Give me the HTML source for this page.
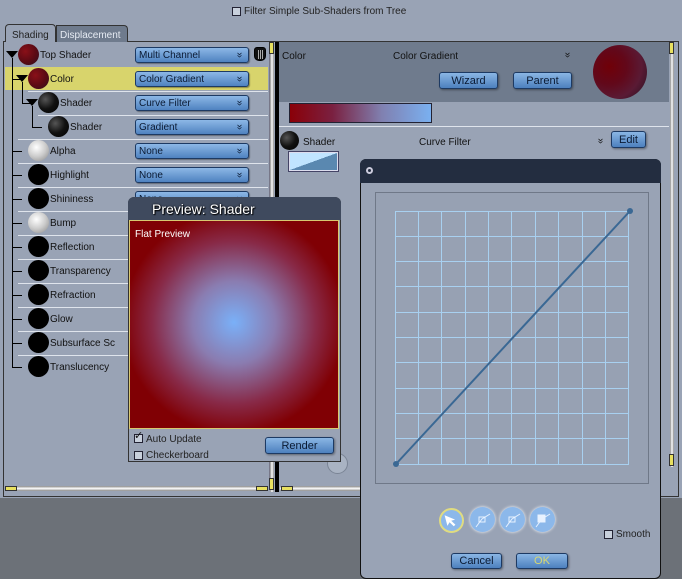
<!DOCTYPE html>
<html><head><meta charset="utf-8"><style>
*{margin:0;padding:0;box-sizing:border-box}
body{width:682px;height:575px;overflow:hidden;position:relative;background:#6c7178;font-family:"Liberation Sans",sans-serif;font-size:10px;color:#111}
.a{position:absolute}
.dd{position:absolute;left:135px;width:114px;height:16px;border:1px solid #1d3a63;border-radius:3px;background:linear-gradient(#8db8e6,#4f82c0);color:#0a1a33;font-size:10px;line-height:16px;padding-left:3px;box-shadow:1px 1px 1px rgba(0,0,0,.35)}
.dd:after{content:"»";position:absolute;right:6px;top:0px;transform:rotate(90deg);font-size:10px;line-height:14px}
.sp{position:absolute;width:21px;height:21px;border-radius:50%}
.red{background:radial-gradient(circle at 35% 35%,#8a1018,#5a0a14 55%,#2a1022)}
.blk{background:radial-gradient(circle at 35% 35%,#555,#111 50%,#000)}
.blk2{background:#000}
.wht{background:radial-gradient(circle at 40% 35%,#fff,#ccc 50%,#888)}
.lbl{position:absolute;font-size:10px;line-height:12px}
.sep{position:absolute;height:1px;background:#dfe4ec;right:0}
.btn{position:absolute;height:17px;border:1px solid #1d3a63;border-radius:3px;background:linear-gradient(#8ab6e4,#4d80be);text-align:center;font-size:11px;line-height:16px;color:#0a1a33;box-shadow:1px 1px 2px rgba(0,0,0,.4)}
.cb{position:absolute;width:9px;height:9px;border:1px solid #223;background:#c8d0dc}
.tl{position:absolute;background:#000}
</style></head><body>
<div class="a" style="left:0;top:0;width:682px;height:498px;background:#99a3b5"></div>
<div class="cb" style="left:232px;top:7px"></div>
<div class="lbl" style="left:244px;top:6px;color:#222">Filter Simple Sub-Shaders from Tree</div>
<div class="a" style="left:3px;top:41px;width:676px;height:456px;border:1px solid #333"></div>
<div class="a" style="left:5px;top:24px;width:51px;height:18px;border:1px solid #333;border-bottom:none;border-radius:4px 4px 0 0;background:#99a3b5"></div>
<div class="lbl" style="left:12px;top:30px;color:#222">Shading</div>
<div class="a" style="left:56px;top:25px;width:72px;height:17px;border:1px solid #333;border-bottom:none;border-radius:0 4px 0 0;background:#6f7b8d"></div>
<div class="lbl" style="left:60px;top:30px;color:#e6ebf3">Displacement</div>
<div class="a" style="left:5px;top:42px;width:265px;height:446px;background:#99a3b5;border-right:1px solid #778"></div>
<div class="a" style="left:5px;top:67px;width:263px;height:23px;background:#d8d46c"></div>
<div class="tl" style="left:12px;top:58px;width:1px;height:310px"></div>
<div class="tl" style="left:22px;top:82px;width:1px;height:22px"></div>
<div class="tl" style="left:22px;top:103px;width:10px;height:1px"></div>
<div class="tl" style="left:32px;top:106px;width:1px;height:21px"></div>
<div class="tl" style="left:32px;top:127px;width:10px;height:1px"></div>
<div class="tl" style="left:12px;top:79px;width:10px;height:1px"></div>
<div class="a" style="left:6px;top:51px;border-left:6px solid transparent;border-right:6px solid transparent;border-top:7px solid #000"></div>
<div class="a" style="left:16px;top:75px;border-left:6px solid transparent;border-right:6px solid transparent;border-top:7px solid #000"></div>
<div class="a" style="left:26px;top:99px;border-left:6px solid transparent;border-right:6px solid transparent;border-top:7px solid #000"></div>
<div class="sp red" style="left:18px;top:44px"></div><div class="lbl" style="left:40px;top:50px">Top Shader</div>
<div class="dd" style="top:47px">Multi Channel</div>
<div class="a" style="left:254px;top:47px;width:12px;height:14px;border-radius:3px 3px 5px 5px;background:#111;border:1px solid #000"></div>
<div class="a" style="left:257px;top:50px;width:6px;height:9px;background:repeating-linear-gradient(90deg,#111 0 1px,#aaa 1px 2px)"></div>
<div class="sp red" style="left:28px;top:68px"></div><div class="lbl" style="left:50px;top:74px">Color</div>
<div class="dd" style="top:71px">Color Gradient</div>
<div class="sep" style="left:28px;top:91px;width:240px"></div>
<div class="sp blk" style="left:38px;top:92px"></div><div class="lbl" style="left:60px;top:98px">Shader</div>
<div class="dd" style="top:95px">Curve Filter</div>
<div class="sep" style="left:38px;top:115px;width:230px"></div>
<div class="sp blk" style="left:48px;top:116px"></div><div class="lbl" style="left:70px;top:122px">Shader</div>
<div class="dd" style="top:119px">Gradient</div>
<div class="sep" style="left:18px;top:139px;width:250px"></div>
<div class="tl" style="left:12px;top:151px;width:10px;height:1px"></div><div class="sp wht" style="left:28px;top:140px"></div><div class="lbl" style="left:50px;top:146px">Alpha</div><div class="dd" style="top:143px">None</div><div class="sep" style="left:18px;top:163px;width:250px"></div>
<div class="tl" style="left:12px;top:175px;width:10px;height:1px"></div><div class="sp blk2" style="left:28px;top:164px"></div><div class="lbl" style="left:50px;top:170px">Highlight</div><div class="dd" style="top:167px">None</div><div class="sep" style="left:18px;top:187px;width:250px"></div>
<div class="tl" style="left:12px;top:199px;width:10px;height:1px"></div><div class="sp blk2" style="left:28px;top:188px"></div><div class="lbl" style="left:50px;top:194px">Shininess</div><div class="dd" style="top:191px">None</div><div class="sep" style="left:18px;top:211px;width:250px"></div>
<div class="tl" style="left:12px;top:223px;width:10px;height:1px"></div><div class="sp wht" style="left:28px;top:212px"></div><div class="lbl" style="left:50px;top:218px">Bump</div><div class="sep" style="left:18px;top:235px;width:250px"></div>
<div class="tl" style="left:12px;top:247px;width:10px;height:1px"></div><div class="sp blk2" style="left:28px;top:236px"></div><div class="lbl" style="left:50px;top:242px">Reflection</div><div class="sep" style="left:18px;top:259px;width:250px"></div>
<div class="tl" style="left:12px;top:271px;width:10px;height:1px"></div><div class="sp blk2" style="left:28px;top:260px"></div><div class="lbl" style="left:50px;top:266px">Transparency</div><div class="sep" style="left:18px;top:283px;width:250px"></div>
<div class="tl" style="left:12px;top:295px;width:10px;height:1px"></div><div class="sp blk2" style="left:28px;top:284px"></div><div class="lbl" style="left:50px;top:290px">Refraction</div><div class="sep" style="left:18px;top:307px;width:250px"></div>
<div class="tl" style="left:12px;top:319px;width:10px;height:1px"></div><div class="sp blk2" style="left:28px;top:308px"></div><div class="lbl" style="left:50px;top:314px">Glow</div><div class="sep" style="left:18px;top:331px;width:250px"></div>
<div class="tl" style="left:12px;top:343px;width:10px;height:1px"></div><div class="sp blk2" style="left:28px;top:332px"></div><div class="lbl" style="left:50px;top:338px">Subsurface Sc</div><div class="sep" style="left:18px;top:355px;width:250px"></div>
<div class="tl" style="left:12px;top:367px;width:10px;height:1px"></div><div class="sp blk2" style="left:28px;top:356px"></div><div class="lbl" style="left:50px;top:362px">Translucency</div>
<div class="a" style="left:270px;top:42px;width:4px;height:450px;background:linear-gradient(90deg,#888,#fff,#888)"></div>
<div class="a" style="left:269px;top:42px;width:5px;height:12px;background:#e8e060;border:1px solid #333"></div>
<div class="a" style="left:269px;top:478px;width:5px;height:12px;background:#e8e060;border:1px solid #333"></div>
<div class="a" style="left:5px;top:486px;width:263px;height:5px;background:linear-gradient(#888,#fff,#888)"></div>
<div class="a" style="left:5px;top:486px;width:12px;height:5px;background:#e8e060;border:1px solid #333"></div>
<div class="a" style="left:256px;top:486px;width:12px;height:5px;background:#e8e060;border:1px solid #333"></div>
<div class="a" style="left:275px;top:42px;width:4px;height:450px;background:#000"></div>
<div class="a" style="left:279px;top:42px;width:390px;height:60px;background:#6f7b8d"></div>
<div class="lbl" style="left:282px;top:51px;font-size:10px">Color</div>
<div class="lbl" style="left:393px;top:51px">Color Gradient</div>
<div class="lbl" style="left:564px;top:49px;transform:rotate(90deg)">»</div>
<div class="btn" style="left:439px;top:72px;width:59px">Wizard</div>
<div class="btn" style="left:513px;top:72px;width:59px">Parent</div>
<div class="sp" style="left:593px;top:45px;width:54px;height:54px;background:radial-gradient(circle at 30% 40%,#700008 0,#62081a 35%,#5a1a34 65%,#3a1428 85%,#241020)"></div>
<div class="a" style="left:289px;top:103px;width:143px;height:20px;border:1px solid #223;background:linear-gradient(90deg,#8a0008,#7a2040 30%,#8080b0 65%,#7ab0f0)"></div>
<div class="a" style="left:279px;top:126px;width:390px;height:1px;background:#dfe4ec"></div>
<div class="sp blk" style="left:280px;top:131px;width:19px;height:19px"></div>
<div class="lbl" style="left:303px;top:137px">Shader</div>
<div class="lbl" style="left:419px;top:137px">Curve Filter</div>
<div class="lbl" style="left:597px;top:135px;transform:rotate(90deg)">»</div>
<div class="btn" style="left:611px;top:131px;width:35px;height:17px">Edit</div>
<div class="a" style="left:289px;top:152px;width:49px;height:19px;border:1px solid #dde;background:linear-gradient(to top left,#5a88b0 50%,#c0e4ff 50%);outline:1px solid #446"></div>
<div class="a" style="left:670px;top:42px;width:4px;height:425px;background:linear-gradient(90deg,#888,#fff,#888)"></div>
<div class="a" style="left:669px;top:42px;width:5px;height:12px;background:#e8e060;border:1px solid #333"></div>
<div class="a" style="left:669px;top:454px;width:5px;height:12px;background:#e8e060;border:1px solid #333"></div>
<div class="a" style="left:280px;top:486px;width:80px;height:5px;background:linear-gradient(#888,#fff,#888)"></div>
<div class="a" style="left:281px;top:486px;width:12px;height:5px;background:#e8e060;border:1px solid #333"></div>
<div class="a" style="left:327px;top:453px;width:21px;height:21px;border-radius:50%;border:1px solid #7a8495;background:#a9b3c3"></div>
<div class="a" style="left:128px;top:197px;width:213px;height:265px;background:#99a3b5;border:1px solid #333;border-radius:6px 6px 0 0"></div>
<div class="a" style="left:128px;top:197px;width:213px;height:23px;background:#3f4a5e;border-radius:6px 6px 0 0"></div>
<div class="lbl" style="left:152px;top:201px;font-size:14px;line-height:16px;color:#fff;text-shadow:0 0 2px #000,1px 1px 1px #000">Preview: Shader</div>
<div class="a" style="left:129px;top:220px;width:210px;height:209px;border:1px solid #d8c870;background:radial-gradient(circle at 50% 49%,#7ab0f8 0,#8a7cb0 28%,#882a48 55%,#800004 75%)"></div>
<div class="lbl" style="left:135px;top:229px;color:#fff;font-size:10px">Flat Preview</div>
<div class="cb" style="left:134px;top:434px"></div><div class="lbl" style="left:134px;top:430px;font-size:11px">✓</div>
<div class="lbl" style="left:146px;top:434px;color:#222">Auto Update</div>
<div class="cb" style="left:134px;top:451px"></div>
<div class="lbl" style="left:146px;top:450px;color:#222">Checkerboard</div>
<div class="btn" style="left:265px;top:437px;width:69px;height:17px">Render</div>
<div class="a" style="left:360px;top:159px;width:301px;height:420px;background:#99a3b5;border:1px solid #111;border-radius:6px"></div>
<div class="a" style="left:360px;top:159px;width:301px;height:24px;background:#232d40;border-radius:6px 6px 0 0"></div>
<div class="a" style="left:366px;top:167px;width:7px;height:7px;border-radius:50%;border:2px solid #ccd"></div>
<div class="a" style="left:375px;top:192px;width:274px;height:292px;border:1px solid #6f7888;background:#97a1b3"></div>
<svg class="a" style="left:390px;top:205px" width="246" height="266" viewBox="390 205 246 266">
<g stroke="#a8d0f0" stroke-width="1">
<path d="M395.5 211v253M418.5 211v253M441.5 211v253M465.5 211v253M488.5 211v253M511.5 211v253M535.5 211v253M558.5 211v253M582.5 211v253M605.5 211v253M628.5 211v253"/>
<path d="M395 211.5h234M395 236.5h234M395 261.5h234M395 286.5h234M395 312.5h234M395 337.5h234M395 362.5h234M395 388.5h234M395 413.5h234M395 438.5h234M395 464.5h234"/>
</g>
<path d="M396 464L630 211" stroke="#3a6894" stroke-width="2"/>
<circle cx="396" cy="464" r="3" fill="#3a6894"/><circle cx="630" cy="211" r="3" fill="#3a6894"/>
</svg>
<div class="a" style="left:439px;top:508px;width:25px;height:25px;border-radius:50%;background:#8cb8ea;border:2px solid #e0dc80"></div>
<svg class="a" style="left:439px;top:508px" width="25" height="25"><path d="M7 6L7 17L10 14L13 19L15 18L12 13L16 13Z" fill="#fff" transform="rotate(-15 11 12)"/></svg>
<div class="a" style="left:470px;top:507px;width:25px;height:25px;border-radius:50%;background:#8cb8ea;box-shadow:0 0 3px #fff"></div>
<div class="a" style="left:500px;top:507px;width:25px;height:25px;border-radius:50%;background:#8cb8ea;box-shadow:0 0 3px #fff"></div>
<div class="a" style="left:530px;top:507px;width:25px;height:25px;border-radius:50%;background:#8cb8ea;box-shadow:0 0 3px #fff"></div>
<svg class="a" style="left:470px;top:507px" width="90" height="26"><g stroke="#e8f2ff" fill="none" stroke-width="1"><path d="M6 20l6-8 8-5"/><rect x="9" y="10" width="6" height="5"/><path d="M36 20l6-8 8-5"/><rect x="39" y="10" width="6" height="5"/><path d="M66 20l6-8 8-5"/><rect x="68" y="8" width="7" height="7" fill="#e8f2ff"/></g></svg>
<div class="cb" style="left:604px;top:530px"></div>
<div class="lbl" style="left:616px;top:529px;color:#222">Smooth</div>
<div class="btn" style="left:451px;top:553px;width:51px;height:16px;line-height:15px">Cancel</div>
<div class="btn" style="left:516px;top:553px;width:52px;height:16px;line-height:15px;color:#d8d870">OK</div>
</body></html>
